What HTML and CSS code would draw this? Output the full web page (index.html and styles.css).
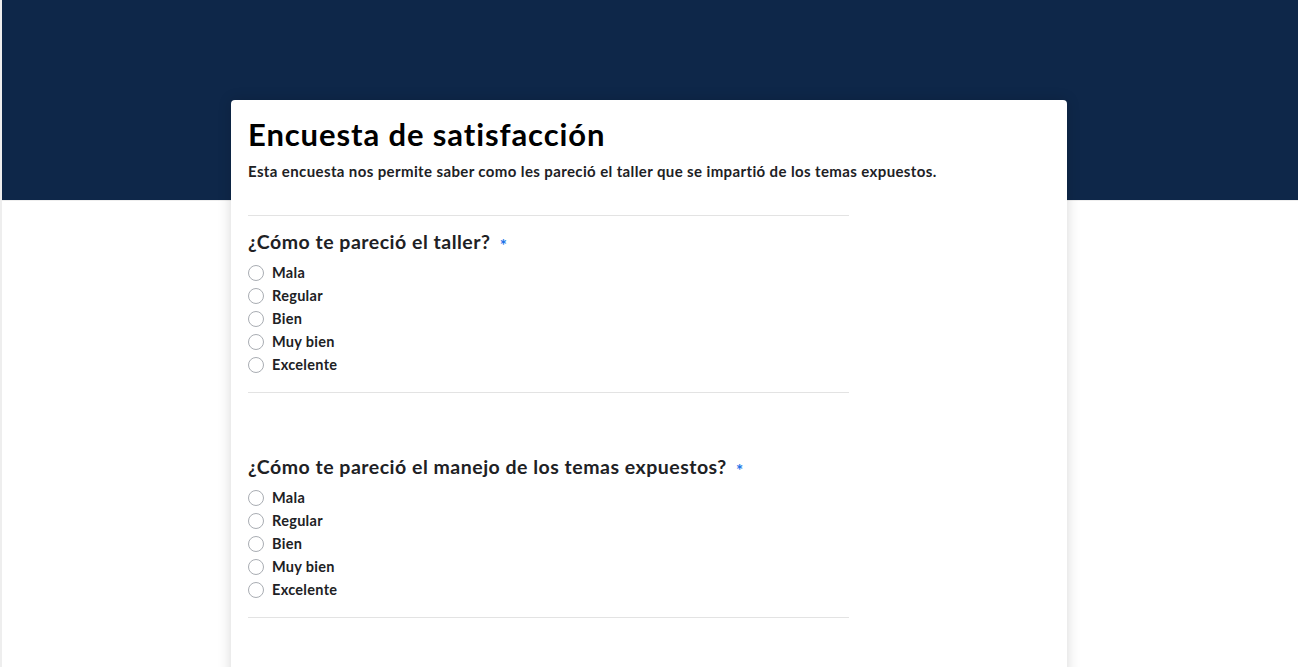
FILE: index.html
```html
<!DOCTYPE html>
<html lang="es">
<head>
<meta charset="utf-8">
<title>Encuesta de satisfacción</title>
<link rel="stylesheet" href="styles.css">
</head>
<body>
<div class="page">
  <header class="banner"></header>
  <main class="card">
    <h1 class="title">Encuesta de satisfacción</h1>
    <p class="desc">Esta encuesta nos permite saber como les pareció el taller que se impartió de los temas expuestos.</p>
    <hr class="rule">
    <section class="question">
      <h2 class="q-title">¿Cómo te pareció el taller? <span class="req">*</span></h2>
      <ul class="options">
        <li class="option"><span class="radio"></span>Mala</li>
        <li class="option"><span class="radio"></span>Regular</li>
        <li class="option"><span class="radio"></span>Bien</li>
        <li class="option"><span class="radio"></span>Muy bien</li>
        <li class="option"><span class="radio"></span>Excelente</li>
      </ul>
    </section>
    <hr class="rule">
    <section class="question question-spaced">
      <h2 class="q-title">¿Cómo te pareció el manejo de los temas expuestos? <span class="req">*</span></h2>
      <ul class="options">
        <li class="option"><span class="radio"></span>Mala</li>
        <li class="option"><span class="radio"></span>Regular</li>
        <li class="option"><span class="radio"></span>Bien</li>
        <li class="option"><span class="radio"></span>Muy bien</li>
        <li class="option"><span class="radio"></span>Excelente</li>
      </ul>
    </section>
    <hr class="rule">
    <div class="spacer"></div>
  </main>
</div>
</body>
</html>
```

FILE: styles.css
```css
* { box-sizing: border-box; }
html, body {
  margin: 0;
  padding: 0;
  background: #ffffff;
  height: 667px;
  overflow: hidden;
}
body {
  font-family: "Lato", "Noto Sans", sans-serif;
  color: #202124;
}
.page {
  border-left: 2px solid #eeeeee;
}
.banner {
  height: 201px;
  background: #0e2749;
  border-bottom: 1px solid #eeeeee;
}
.card {
  width: 836px;
  margin: -101px auto 0;
  margin-left: 229px;
  background: #ffffff;
  border-radius: 4px 4px 0 0;
  box-shadow: 0 0 14px rgba(0, 0, 0, 0.16);
  padding: 14px 17px 60px;
  position: relative;
}
.title {
  margin: 0;
  font-size: 31px;
  line-height: 40px;
  font-weight: 700;
  color: #000000;
  letter-spacing: 0.9px;
}
.desc {
  margin: 7px 0 0;
  font-size: 15px;
  line-height: 20px;
  font-weight: 700;
  color: #202124;
  letter-spacing: 0.38px;
}
.rule {
  width: 601px;
  margin: 34px 0 0;
  border: 0;
  border-top: 1px solid #e3e3e3;
  height: 0;
}
.question {
  padding-top: 14px;
}
.question-spaced {
  padding-top: 62px;
}
.q-title {
  margin: 0;
  height: 24px;
  font-size: 19.5px;
  line-height: 24px;
  font-weight: 700;
  color: #202124;
  letter-spacing: 0.5px;
}
.req {
  color: #1a73e8;
  font-size: 17px;
  line-height: 0;
  vertical-align: -3px;
  margin-left: 4px;
}
.options {
  list-style: none;
  margin: 7px 0 0;
  padding: 0;
}
.option {
  display: flex;
  align-items: center;
  height: 23px;
  font-size: 14.5px;
  font-weight: 700;
  color: #202124;
  letter-spacing: 0.3px;
}
.radio {
  width: 16px;
  height: 16px;
  border: 1px solid #a9adb3;
  border-radius: 50%;
  margin-right: 8px;
  flex: none;
}
.question + .rule {
  margin-top: 16px;
}
.spacer {
  height: 40px;
}
```
